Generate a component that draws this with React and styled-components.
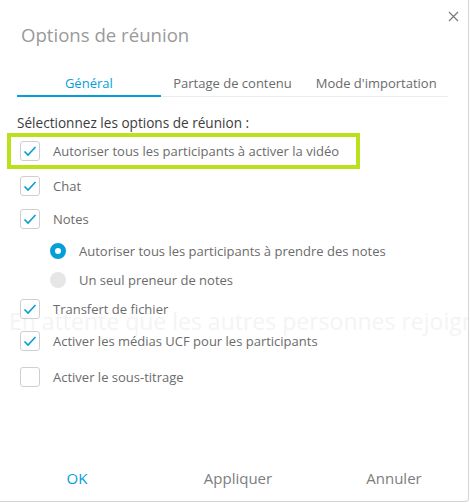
import React from 'react'
import styled, { createGlobalStyle } from 'styled-components'

const GlobalStyle = createGlobalStyle`
  html, body {
    margin: 0;
    padding: 0;
    background: #ffffff;
  }
  body {
    font-family: "Open Sans", "Noto Sans", sans-serif;
  }
`

const BLUE = '#049fd9'

const Dialog = styled.div`
  position: relative;
  box-sizing: border-box;
  width: 469px;
  height: 502px;
  background: #fff;
  border-right: 1px solid #d4d4d4;
  border-bottom: 1px solid #d4d4d4;
  border-bottom-right-radius: 4px;
  display: flex;
  flex-direction: column;
  overflow: hidden;
`

/* meeting-window text showing faintly through the dialog */
const Backdrop = styled.div`
  position: absolute;
  z-index: -1;
  left: 9px;
  top: 208px;
  font-size: 23px;
  color: #f4f4f4;
  white-space: nowrap;
  pointer-events: none;
`

const Close = styled.button`
  position: absolute;
  top: 8px;
  right: 7px;
  width: 16px;
  height: 16px;
  padding: 0;
  border: 0;
  background: none;
  display: flex;
  align-items: center;
  justify-content: center;
`

const Title = styled.h1`
  margin: 23px 0 0 21px;
  font-size: 18.6px;
  font-weight: 400;
  color: #9a9a9a;
  line-height: 24px;
`

const Tabs = styled.div`
  margin: 26px 20px 0 17px;
  display: grid;
  grid-template-columns: repeat(3, 1fr);
  border-bottom: 1px solid #ececec;
`

const Tab = styled.div`
  text-align: center;
  font-size: 13px;
  line-height: 20px;
  padding-bottom: 2px;
  color: ${p => (p.active ? BLUE : '#6b6b6b')};
  border-bottom: 2px solid ${p => (p.active ? BLUE : 'transparent')};
  margin-bottom: -1px;
  white-space: nowrap;
`

const Body = styled.div`
  position: relative;
  isolation: isolate;
  padding: 17px 0 0 17px;
  flex: 1;
`

const Lead = styled.div`
  font-size: 13.6px;
  color: #3c3c3c;
  line-height: 18px;
`

const Highlight = styled.div`
  margin: 1px 0 0 -10px;
  width: 353px;
  height: 36px;
  box-sizing: border-box;
  border: 4px solid #b9e21c;
  display: flex;
  align-items: center;
  padding-left: 9px;
`

const Row = styled.div`
  display: flex;
  align-items: center;
  height: ${p => p.h || 32}px;
  padding-left: ${p => (p.indent ? 33 : 3)}px;
`

const Box = styled.span`
  box-sizing: border-box;
  width: 20px;
  height: 20px;
  border: 1px solid #cfcfcf;
  border-radius: 3px;
  background: #fff;
  display: flex;
  align-items: center;
  justify-content: center;
  flex: none;
`

const Radio = styled.span`
  box-sizing: border-box;
  width: 16px;
  height: 16px;
  border-radius: 50%;
  flex: none;
  background: ${p => (p.on ? '#fff' : '#e6e6e6')};
  border: ${p => (p.on ? `5px solid ${BLUE}` : '0')};
`

const Label = styled.span`
  margin-left: 13px;
  font-size: 13px;
  color: #6b6b6b;
  white-space: nowrap;
`

const Footer = styled.div`
  display: grid;
  grid-template-columns: repeat(3, 1fr);
  height: 46px;
  align-items: center;
`

const Action = styled.button`
  border: 0;
  background: none;
  font-family: inherit;
  font-size: 15px;
  padding: 0;
  color: ${p => (p.primary ? BLUE : '#7d7d7d')};
  justify-self: center;
  margin-left: ${p => p.shift || 0}px;
`

function Check({ checked }) {
  return (
    <Box>
      {checked && (
        <svg width="14" height="12" viewBox="0 0 14 12">
          <polyline points="1.5,6.5 5,10 12.5,2" fill="none" stroke={BLUE} strokeWidth="1.6" />
        </svg>
      )}
    </Box>
  )
}

function CheckRow({ checked, label, h }) {
  return (
    <Row h={h}>
      <Check checked={checked} />
      <Label>{label}</Label>
    </Row>
  )
}

export default function App() {
  return (
    <>
      <GlobalStyle />
      <Dialog>
        <Close aria-label="Fermer">
          <svg width="11" height="11" viewBox="0 0 11 11">
            <path d="M1 1L10 10M10 1L1 10" stroke="#7a7a7a" strokeWidth="1.2" />
          </svg>
        </Close>
        <Title>Options de réunion</Title>
        <Tabs>
          <Tab active>Général</Tab>
          <Tab>Partage de contenu</Tab>
          <Tab>Mode d'importation</Tab>
        </Tabs>
        <Body>
          <Backdrop>En attente que les autres personnes rejoignent la réunion</Backdrop>
          <Lead>Sélectionnez les options de réunion :</Lead>
          <Highlight>
            <Check checked />
            <Label>Autoriser tous les participants à activer la vidéo</Label>
          </Highlight>
          <CheckRow checked label="Chat" h={34} />
          <CheckRow checked label="Notes" h={32} />
          <Row indent h={32}>
            <Radio on />
            <Label>Autoriser tous les participants à prendre des notes</Label>
          </Row>
          <Row indent h={26}>
            <Radio />
            <Label>Un seul preneur de notes</Label>
          </Row>
          <CheckRow checked label="Transfert de fichier" h={32} />
          <CheckRow checked label="Activer les médias UCF pour les participants" h={32} />
          <CheckRow label="Activer le sous-titrage" h={40} />
        </Body>
        <Footer>
          <Action primary shift={-2}>OK</Action>
          <Action shift={8}>Appliquer</Action>
          <Action shift={8}>Annuler</Action>
        </Footer>
      </Dialog>
    </>
  )
}
